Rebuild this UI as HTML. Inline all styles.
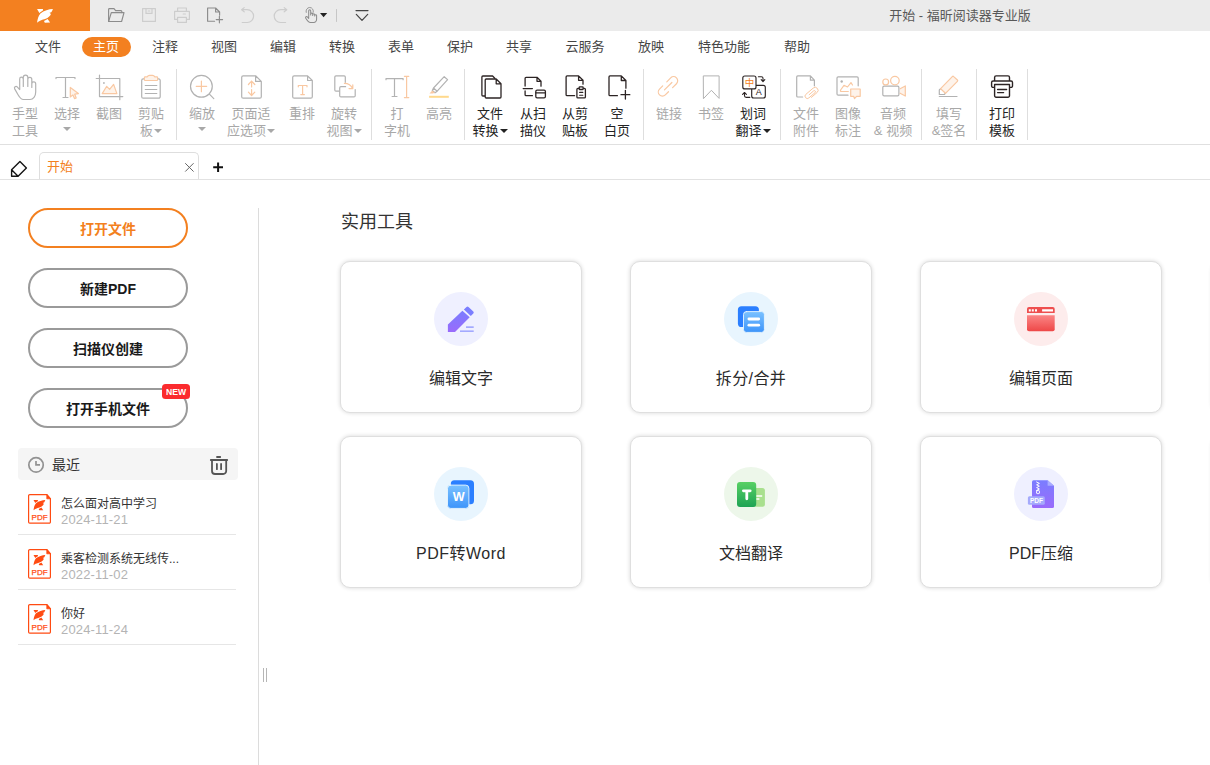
<!DOCTYPE html>
<html lang="zh-CN">
<head>
<meta charset="utf-8">
<title>开始 - 福昕阅读器专业版</title>
<style>
*{box-sizing:border-box;margin:0;padding:0}
html,body{width:1210px;height:765px;overflow:hidden;background:#fff}
body{position:relative;font-family:"Liberation Sans","Noto Sans CJK SC",sans-serif;font-size:13px;color:#333}
.abs{position:absolute}
svg{position:absolute;overflow:visible}
/* title bar */
#titlebar{position:absolute;left:0;top:0;width:1210px;height:31px;background:#ebebeb}
#logo{position:absolute;left:0;top:0;width:90px;height:31px;background:#f38020}
#title{position:absolute;left:860px;top:0;width:200px;height:31px;line-height:32px;text-align:center;font-size:13px;color:#585858;white-space:nowrap}
/* menu */
.mi{position:absolute;top:37px;width:70px;margin-left:-35px;height:20px;line-height:19px;font-size:13px;color:#464646;white-space:nowrap;text-align:center}
.mi.act{background:#f38020;color:#fff;border-radius:10px;width:49px;margin-left:-24.5px}
/* ribbon */
#ribbon{position:absolute;left:0;top:62px;width:1210px;height:83px;border-bottom:1px solid #e0e0e0}
.rb{position:absolute;top:105px;width:80px;margin-left:-40px;text-align:center;line-height:17px;font-size:13px;color:#a8a8a8;white-space:nowrap}
.rb.on{color:#222}
.sep{position:absolute;top:69px;width:1px;height:71px;background:#dedede}
.car{display:inline-block;width:0;height:0;border-left:4px solid transparent;border-right:4px solid transparent;border-top:4.5px solid currentColor;vertical-align:middle;margin-left:1px;position:relative;top:-1px}
.car.s{margin-left:0;top:-3px;left:0}
/* tab row */
#tabline{position:absolute;left:0;top:179px;width:1210px;height:1px;background:#e2e2e2}
#tab{position:absolute;left:39px;top:152px;width:160px;height:28px;border:1px solid #dedede;border-bottom:none;border-radius:5px 5px 0 0;background:#fff}
#tab span{position:absolute;left:7px;top:6px;line-height:16px;font-size:13px;color:#f38020}
/* left panel */
.btn{position:absolute;left:28px;width:160px;height:39.5px;border:2px solid #9a9a9a;border-radius:20px;text-align:center;line-height:39px;font-size:14px;font-weight:bold;color:#1a1a1a}
.btn.pri{border-color:#f38020;color:#f38020}
#new{position:absolute;left:162px;top:384px;width:28px;height:15px;border-radius:3.5px;background:#fb2b2e;color:#fff;font-size:9.6px;font-weight:bold;line-height:15.4px;text-align:center}
#new b{display:inline-block;transform:scaleX(.9);transform-origin:50% 50%}
#recent{position:absolute;left:18px;top:448px;width:220px;height:32px;border-radius:4px;background:#f5f5f5}
#recent span{position:absolute;left:34px;top:8px;font-size:14px;line-height:18px;color:#333}
.fi{position:absolute;left:18px;width:218px;height:55px;border-bottom:1px solid #e6e6e6}
.fi .t{position:absolute;left:43px;top:16px;font-size:12px;line-height:16px;color:#333;white-space:nowrap}
.fi .d{position:absolute;left:43px;top:32px;font-size:13px;line-height:16px;color:#b4b4b4;white-space:nowrap;letter-spacing:.15px}
#vline{position:absolute;left:258px;top:208px;width:1px;height:557px;background:#dcdcdc}
/* main */
#h1{position:absolute;left:341px;top:209px;font-size:18px;line-height:26px;color:#333;white-space:nowrap}
.card{position:absolute;width:242px;height:152px;border:1px solid #dfdfdf;border-radius:10px;background:#fff;box-shadow:0 0 4px rgba(0,0,0,.16)}
.card .c{position:absolute;left:93px;top:30px;width:54px;height:54px;border-radius:50%}
.card .l{position:absolute;left:0;width:240px;top:106px;text-align:center;font-size:16px;line-height:22px;color:#2b2b2b;white-space:nowrap}
</style>
</head>
<body>
<!-- TITLEBAR -->
<div id="titlebar">
  <div id="logo"></div>
  <div id="title">开始 - 福昕阅读器专业版</div>
</div>
<!-- MENU -->
<div class="mi" style="left:48px">文件</div>
<div class="mi act" style="left:106px">主页</div>
<div class="mi" style="left:165px">注释</div>
<div class="mi" style="left:224px">视图</div>
<div class="mi" style="left:283px">编辑</div>
<div class="mi" style="left:342px">转换</div>
<div class="mi" style="left:401px">表单</div>
<div class="mi" style="left:460px">保护</div>
<div class="mi" style="left:519px">共享</div>
<div class="mi" style="left:585px">云服务</div>
<div class="mi" style="left:651px">放映</div>
<div class="mi" style="left:724px">特色功能</div>
<div class="mi" style="left:797px">帮助</div>
<!-- RIBBON -->
<div id="ribbon"></div>
<div class="rb" style="left:25px">手型<br>工具</div>
<div class="rb" style="left:67px">选择<br><i class="car s"></i></div>
<div class="rb" style="left:109px">截图</div>
<div class="rb" style="left:151px">剪贴<br>板<i class="car"></i></div>
<div class="sep" style="left:176px"></div>
<div class="rb" style="left:202px">缩放<br><i class="car s"></i></div>
<div class="rb" style="left:251px">页面适<br>应选项<i class="car"></i></div>
<div class="rb" style="left:302px">重排</div>
<div class="rb" style="left:344px">旋转<br>视图<i class="car"></i></div>
<div class="sep" style="left:371px"></div>
<div class="rb" style="left:397px">打<br>字机</div>
<div class="rb" style="left:439px">高亮</div>
<div class="sep" style="left:464px"></div>
<div class="rb on" style="left:490px">文件<br>转换<i class="car"></i></div>
<div class="rb on" style="left:533px">从扫<br>描仪</div>
<div class="rb on" style="left:575px">从剪<br>贴板</div>
<div class="rb on" style="left:617px">空<br>白页</div>
<div class="sep" style="left:643px"></div>
<div class="rb" style="left:669px">链接</div>
<div class="rb" style="left:711px">书签</div>
<div class="rb on" style="left:753px">划词<br>翻译<i class="car"></i></div>
<div class="sep" style="left:780px"></div>
<div class="rb" style="left:806px">文件<br>附件</div>
<div class="rb" style="left:848px">图像<br>标注</div>
<div class="rb" style="left:893px">音频<br>&amp; 视频</div>
<div class="sep" style="left:921px"></div>
<div class="rb" style="left:949px">填写<br>&amp;签名</div>
<div class="sep" style="left:976px"></div>
<div class="rb on" style="left:1002px">打印<br>模板</div>
<div class="sep" style="left:1027px"></div>
<!-- TAB ROW -->
<div id="tab"><span>开始</span></div>
<div id="tabline"></div>
<!-- LEFT PANEL -->
<div class="btn pri" style="top:208px">打开文件</div>
<div class="btn" style="top:268px">新建PDF</div>
<div class="btn" style="top:328px">扫描仪创建</div>
<div class="btn" style="top:388px">打开手机文件</div>
<div id="new"><b>NEW</b></div>
<div id="recent"><span>最近</span></div>
<div class="fi" style="top:480px"><div class="t">怎么面对高中学习</div><div class="d">2024-11-21</div></div>
<div class="fi" style="top:535px"><div class="t">乘客检测系统无线传...</div><div class="d">2022-11-02</div></div>
<div class="fi" style="top:590px"><div class="t">你好</div><div class="d">2024-11-24</div></div>
<div id="vline"></div>
<!-- MAIN -->
<div id="h1">实用工具</div>
<div class="card" style="left:340px;top:261px"><div class="c" style="background:#eff0ff"></div><div class="l">编辑文字</div></div>
<div class="card" style="left:630px;top:261px"><div class="c" style="background:#e8f5fe"></div><div class="l" style="letter-spacing:.4px">拆分/合并</div></div>
<div class="card" style="left:920px;top:261px"><div class="c" style="background:#fdecec"></div><div class="l">编辑页面</div></div>
<div class="card" style="left:1212px;top:261px"></div>
<div class="card" style="left:340px;top:436px"><div class="c" style="background:#e8f5fe"></div><div class="l" style="letter-spacing:.5px">PDF转Word</div></div>
<div class="card" style="left:630px;top:436px"><div class="c" style="background:#edf7ea"></div><div class="l">文档翻译</div></div>
<div class="card" style="left:920px;top:436px"><div class="c" style="background:#eff0ff"></div><div class="l">PDF压缩</div></div>
<div class="card" style="left:1212px;top:436px"></div>
<!-- ICON OVERLAY (page coordinates) -->
<svg id="ov" width="1210" height="765" viewBox="0 0 1210 765" style="left:0;top:0;pointer-events:none" fill="none" stroke-linecap="round" stroke-linejoin="round">
<defs>
<linearGradient id="gPen" x1="0" y1="0" x2="0" y2="1"><stop offset="0" stop-color="#7a7dff"/><stop offset="1" stop-color="#9a6bfb"/></linearGradient>
<linearGradient id="gBlue" x1="0" y1="0" x2="0" y2="1"><stop offset="0" stop-color="#7ac1ff"/><stop offset="1" stop-color="#3d94fa"/></linearGradient>
<linearGradient id="gRed" x1="0" y1="0" x2="0" y2="1"><stop offset="0" stop-color="#fb8585"/><stop offset="1" stop-color="#ee4848"/></linearGradient>
<linearGradient id="gGreen" x1="0" y1="0" x2="0" y2="1"><stop offset="0" stop-color="#58d064"/><stop offset="1" stop-color="#1ea354"/></linearGradient>
</defs>
<!-- logo -->
<g fill="#fff" stroke="none">
<path d="M52.9 9 C48.8 9.2 44.1 10.5 40.4 13.4 C38.3 15.6 37.5 19.5 37.05 22.8 C38.5 21.3 41 20.3 45.1 19.1 C48.6 17.6 50.6 15.4 50.9 13.9 C50.3 13.6 49.7 13.2 49.5 12.8 C50.3 12.5 51 12.3 51.3 12.2 C52 11.2 52.5 10.1 52.9 9 Z"/>
<path d="M37.05 9 L43 9 L42.9 10.6 C41.6 11.3 40.3 12.2 39.4 13.1 Z"/>
<path d="M47.6 19.1 L50.1 22.6 L44.8 22.8 L44 21.1 C45.3 20.6 46.6 19.8 47.6 19.1 Z"/>
</g>
<!-- titlebar quick icons -->
<g stroke="#8c8c8c" stroke-width="1.15">
<path d="M108.6 21.5 V9.4 a.8 .8 0 0 1 .8 -.8 H114 L115.6 10.6 H121 a.8 .8 0 0 1 .8 .8 V12.6"/>
<path d="M111.3 12.6 H124 L121.6 21.5 H108.6 Z"/>
<path d="M214.6 21.2 H207.6 V8 H215.6 L219.6 12 V15.2 M215.6 8 V12 H219.6"/>
<path d="M216.2 19.6 H222.6 M219.4 16.4 V22.8"/>
<path d="M308.7 17.4 V10.8 a1 1 0 0 1 2 0 V15 V14.1 a1 1 0 0 1 2 0 V15.5 V14.8 a1 1 0 0 1 2 0 V16 V15.6 a.95 .95 0 0 1 1.9 0 V19 C316.7 21 315.4 22.5 313.8 22.5 H310.4 C308.8 22.5 307.4 20.8 305.8 18.2 C305 16.8 306.6 16 307.6 17.2 L308.7 18.4" stroke-width="1.05"/>
<path d="M306.2 12.4 A3.7 3.7 0 1 1 313.2 12.4" stroke-width=".9"/>
</g>
<g stroke="#cdcdcd" stroke-width="1.2">
<rect x="142.6" y="8.6" width="12.8" height="12.8"/>
<path d="M146 8.6 V13.4 H152 V8.6 M148.2 11 H149.8"/>
<path d="M177.6 11.4 V8 H186.4 V11.4 M177.6 19.4 H174.6 V11.4 H189.4 V19.4 H186.4 M177.6 17.4 H186.4 V22.4 H177.6 Z M183.2 14 H185.4"/>
<path d="M244.2 7.6 L241.6 9.7 L244.2 11.8 M241.8 9.7 H247.2 A6.4 6.4 0 0 1 247.2 22.5 H242.2"/>
<path d="M284.2 7.6 L286.8 9.7 L284.2 11.8 M286.6 9.7 H280.6 A6.4 6.4 0 0 0 280.6 22.5 H285.6"/>
</g>
<path d="M320 13 H327.2 L323.6 17.2 Z" fill="#222" stroke="none"/>
<path d="M336.5 9.5 V21.5" stroke="#c6c6c6" stroke-width="1"/>
<path d="M356 10.6 H368 M356.3 14.4 L362 20.4 L367.7 14.4" stroke="#444" stroke-width="1.2"/>
<!-- ribbon icons: disabled gray / light orange -->
<g stroke="#b2b2b2" stroke-width="1.2">
<!-- hand -->
<path d="M19.7 89.6 V79 a1.8 1.8 0 0 1 3.6 0 V86.5 M23.3 79.5 V77.3 a2.25 2.25 0 0 1 4.5 0 V86.5 M27.8 79.4 a2 2 0 0 1 4 0 V87.5 M31.8 83.9 a1.95 1.95 0 0 1 3.9 0 V92 C35.7 96.4 33.2 99.5 30 99.5 H23.4 C21.2 99.5 19.8 97.8 18.2 95 L14.7 88.9 C13.8 87.2 15.8 85.6 17.2 86.9 L19.7 89.6"/>
<!-- text select T -->
<path d="M56 78.6 V77.5 H75 V78.6 M65.5 77.5 V97.5 M63 97.5 H68"/>
<!-- crop -->
<path d="M99.5 75 V96.6 H122.8 M96.2 78.5 H119.8 V99.7"/>
<rect x="103.1" y="82.2" width="1.6" height="1.6" fill="#b2b2b2" stroke="none"/>
<!-- clipboard body + lines -->
<path d="M144.3 78.9 H143.2 a1.5 1.5 0 0 0 -1.5 1.5 V96.7 a1.5 1.5 0 0 0 1.5 1.5 H158.7 a1.5 1.5 0 0 0 1.5 -1.5 V80.4 a1.5 1.5 0 0 0 -1.5 -1.5 H157.7"/>
<path d="M145.3 85.5 H156.8 M145.3 89.5 H156.8 M145.3 93.5 H156.8"/>
<!-- zoom -->
<circle cx="201.4" cy="86.3" r="10.9"/>
<path d="M209.4 94.2 L213.8 98.6"/>
<!-- page fit doc -->
<path d="M255.6 75.8 H243.2 a1.5 1.5 0 0 0 -1.5 1.5 V96.7 a1.5 1.5 0 0 0 1.5 1.5 H259.8 a1.5 1.5 0 0 0 1.5 -1.5 V81.4 Z M255.6 75.8 V81.4 H261.3"/>
<!-- reflow doc -->
<path d="M307.6 75.8 H294.2 a1.5 1.5 0 0 0 -1.5 1.5 V96.7 a1.5 1.5 0 0 0 1.5 1.5 H310.8 a1.5 1.5 0 0 0 1.5 -1.5 V80.5 Z M307.6 75.8 V80.5 H312.3"/>
<!-- rotate rects -->
<path d="M339 91.2 H336 a1.2 1.2 0 0 1 -1.2 -1.2 V77.1 a1.2 1.2 0 0 1 1.2 -1.2 H344.1 a1.2 1.2 0 0 1 1.2 1.2 V82.3"/>
<path d="M345.6 86.7 H340.9 a1.2 1.2 0 0 0 -1.2 1.2 V95.7 a1.2 1.2 0 0 0 1.2 1.2 H354 a1.2 1.2 0 0 0 1.2 -1.2 V89.6"/>
<!-- typewriter T -->
<path d="M386 79.7 V78.6 H403.1 V79.7 M394.5 78.6 V96.5 M392.1 96.5 H397"/>
<!-- highlighter pen -->
<path d="M444.2 76.7 L447.6 79.6 L437.2 91.2 L433.5 88 Z M433.5 88 L432.3 90.5 L435 92.8 L437.2 91.2"/>
<!-- bookmark -->
<path d="M703.7 75.9 H719.1 V98.4 L711.4 90.3 L703.7 98.4 Z" stroke-width="1"/>
<!-- file attach doc -->
<path d="M802.6 97 H797.7 a1 1 0 0 1 -1 -1 V76.9 a1 1 0 0 1 1 -1 H810.4 L814.4 80.2 V85.8 M810.4 75.9 V80.2 H814.4"/>
<!-- image annot frame -->
<path d="M848 95.2 H838.2 a1.2 1.2 0 0 1 -1.2 -1.2 V78 a1.2 1.2 0 0 1 1.2 -1.2 H857 a1.2 1.2 0 0 1 1.2 1.2 V85.8"/>
<circle cx="841.7" cy="81.5" r="1.2" fill="#b2b2b2" stroke="none"/>
<!-- video body -->
<rect x="882.8" y="86.1" width="16.1" height="9.8" rx="1.3"/>
<!-- fill&sign tip + underline -->
<path d="M940.6 88.7 L939.3 90 V94.5 H944.2 L945.5 93.3 M939.3 96.5 H957"/>
</g>
<g stroke="#f9c8a2" stroke-width="1.2" fill="#fef3ea">
<!-- select cursor -->
<path d="M70.3 87.4 V97 L72.9 94.9 L74.5 98.6 L76.2 97.9 L74.7 94.2 L78.4 93.6 Z"/>
<!-- crop mountain -->
<path d="M102.2 93.6 L106.7 86.3 L109.6 89.3 L113.6 84.4 L116.9 93.6 Z"/>
<!-- clipboard clip -->
<path d="M144.4 77.6 a.8 .8 0 0 1 .8 -.8 H147.3 C147.8 75.6 148.6 75.3 149.5 75.3 H152.5 C153.4 75.3 154.2 75.6 154.7 76.8 H156.8 a.8 .8 0 0 1 .8 .8 V79.7 a.8 .8 0 0 1 -.8 .8 H145.2 a.8 .8 0 0 1 -.8 -.8 Z"/>
<!-- fill&sign pen body -->
<path d="M952.3 76.6 a1 1 0 0 1 1.4 0 L957.4 80 a1 1 0 0 1 0 1.4 L945.5 93.3 L940.6 88.7 Z"/>
<!-- video lens -->
<path d="M900.1 88.8 L905.3 85.9 V96.1 L900.1 93.2"/>
</g>
<g stroke="#f9c8a2" stroke-width="1.2">
<!-- zoom plus -->
<path d="M196.2 86.3 H206.7 M201.4 81 V91.7"/>
<!-- page fit arrows -->
<path d="M251.6 81.2 V87 M248.4 84.5 L251.6 81.2 L254.8 84.5 M251.6 89.5 V95.5 M248.4 92.2 L251.6 95.5 L254.8 92.2"/>
<!-- reflow T -->
<path d="M298.3 86.8 V85.5 H307 V86.8 M302.6 85.5 V94.6 M300.8 94.6 H304.4"/>
<!-- rotate arrow -->
<path d="M344.4 83.3 C348.6 83.3 351.2 85.2 352.6 88.5 M349 88.6 H352.8 V84.8"/>
<!-- typewriter I-beam -->
<path d="M406.6 76.3 V97.6 M404.4 76.3 H408.8 M404.4 97.6 H408.8"/>
<!-- link -->
<path transform="translate(668 86.4) rotate(-45)" d="M2.4 -4.1 H7.9 A4.1 4.1 0 0 1 7.9 4.1 H2.4 M-3.4 -4.1 H-7.9 A4.1 4.1 0 0 0 -7.9 4.1 H-3.4 M-5 0 H5.5"/>
<!-- paperclip -->
<path d="M809.2 94.7 L813.6 90.9 a1.1 1.1 0 0 1 1.5 1.7 L808.9 97.9 a2.3 2.3 0 0 1 -3.1 -3.5 L813.2 88.1 a2.9 2.9 0 0 1 3.9 4.4 L811.4 97.4" stroke-width="1"/>
<!-- image annot mountain + bubble -->
<path d="M852.5 85 L851 82.6 L847.5 87 L844 85.3 L840.6 90 Q840 91.5 841.5 91.5 H848.3"/>
<path d="M850.7 89 H860.2 V96.3 H856.6 L854.5 98.5 L853.6 96.3 H850.7 Z" fill="#fef3ea"/>
<!-- video reels -->
<circle cx="885.7" cy="81.9" r="2.9"/>
<circle cx="894.9" cy="80.6" r="4.3"/>
</g>
<path d="M432.3 90.5 L429.5 93.6 L432.9 93.5 L435 92.8 Z" fill="#f9c8a2" stroke="none"/>
<path d="M429.1 96.8 H448.8" stroke="#ffd98c" stroke-width="2" stroke-linecap="butt"/>
<!-- ribbon icons: enabled dark -->
<g stroke="#2c2424" stroke-width="1.3">
<!-- file convert -->
<path d="M484.8 96 H482.9 a1 1 0 0 1 -1 -1 V77 a1 1 0 0 1 1 -1 H492.6 L494.8 78.2"/>
<path d="M496.2 79 H486.2 a1 1 0 0 0 -1 1 V97 a1 1 0 0 0 1 1 H500 a1 1 0 0 0 1 -1 V83.8 Z M496.2 79 V83.8 H501" fill="#fff"/>
<!-- from scanner -->
<path d="M532.4 95.7 H526.1 a1 1 0 0 1 -1 -1 V91 M525.1 86 V78.3 a1 1 0 0 1 1 -1 H537 L541 81.3 V86.2 M537 77.3 V81.3 H541 M523.2 88.6 H532.4"/>
<rect x="535.8" y="90.1" width="9.6" height="7.7" rx="1.3"/>
<path d="M535.8 92.8 H545.4"/>
<!-- from clipboard -->
<path d="M574.6 95.7 H567.1 a1 1 0 0 1 -1 -1 V76.9 a1 1 0 0 1 1 -1 H578.6 L583 80.3 V84.2 M578.6 75.9 V80.3 H583"/>
<rect x="576.9" y="88.4" width="8.5" height="9.5" rx="1"/>
<rect x="579.2" y="86.9" width="3.9" height="2.6" rx=".6" fill="#fff"/>
<path d="M579.6 92.4 H582.8 M579.6 95.2 H582.8" stroke-width="1.1"/>
<!-- blank page -->
<path d="M617.4 95.7 H610 a1 1 0 0 1 -1 -1 V76.9 a1 1 0 0 1 1 -1 H621.3 L625.9 80.5 V88.2 M621.3 75.9 V80.5 H625.9 M621 94.7 H629.8 M625.4 90.3 V99.1"/>
<!-- translate -->
<rect x="751.7" y="85.3" width="13.6" height="12.7" rx="2" stroke-width="1.15"/>
<rect x="742.8" y="76" width="13.2" height="12.9" rx="2" fill="#fff" stroke-width="1.15"/>
<path d="M758.4 76.7 H761.4 a1.6 1.6 0 0 1 1.6 1.6 V81.4 M761.2 79.7 L763 81.6 L764.8 79.7 M749.8 97.4 H746.1 a1.6 1.6 0 0 1 -1.6 -1.6 V92.8 M742.6 94.4 L744.5 92.5 L746.4 94.4" stroke-width="1.1"/>
<!-- print template -->
<path d="M994.6 81 V77.4 a1.5 1.5 0 0 1 1.5 -1.5 H1008 a1.5 1.5 0 0 1 1.5 1.5 V81 M994.6 87.4 H993.1 a1.5 1.5 0 0 1 -1.5 -1.5 V82.5 a1.5 1.5 0 0 1 1.5 -1.5 H1011 a1.5 1.5 0 0 1 1.5 1.5 V85.9 a1.5 1.5 0 0 1 -1.5 1.5 H1009.5 M994.6 84.5 H1009.5 V95.7 a1.5 1.5 0 0 1 -1.5 1.5 H996.1 a1.5 1.5 0 0 1 -1.5 -1.5 Z M997.6 89.5 H1006.6 M997.6 92.6 H1003.6" stroke-width="1.4"/>
</g>
<text x="749.4" y="86.3" font-size="9.5" font-family="Liberation Sans,Noto Sans CJK SC,sans-serif" fill="#f38020" stroke="none" text-anchor="middle">中</text>
<text x="758.7" y="95.4" font-size="9" font-family="Liberation Sans,sans-serif" fill="#2c2424" stroke="none" text-anchor="middle">A</text>
<!-- tab row -->
<path d="M19.95 161.6 L26.4 167.9 L18.1 176.3 H11.6 V169.7 Z M11.6 169.7 L18.1 176.2" stroke="#151515" stroke-width="1.4"/>
<path d="M185.5 163.5 L193.3 171.3 M193.3 163.5 L185.5 171.3" stroke="#666" stroke-width="1"/>
<path d="M213.2 167.2 H223 M218.1 162.4 V172" stroke="#111" stroke-width="2" stroke-linecap="butt"/>
<!-- recent header icons -->
<circle cx="36.05" cy="464.9" r="7.2" stroke="#929292" stroke-width="1.7"/>
<path d="M36 461 V464.9 H40" stroke="#929292" stroke-width="1.7" stroke-linecap="butt" stroke-linejoin="miter"/>
<g stroke="#555" stroke-width="1.8">
<path d="M217 457 H220.2 M210.8 460 H227.2 M212 460 V471 a3 3 0 0 0 3 3 H223.2 a3 3 0 0 0 3 -3 V460 M216.9 464 V469.2 M221.1 464 V469.2"/>
</g>
<!-- splitter grip -->
<path d="M263.5 668 V682 M266.5 668 V682" stroke="#b6b6b6" stroke-width="1" stroke-linecap="butt"/>
<!-- recent file icons -->
<g transform="translate(28 494)">
<path d="M18.8 .6 H1.8 a1.2 1.2 0 0 0 -1.2 1.2 V28 a1.2 1.2 0 0 0 1.2 1.2 H21.2 a1.2 1.2 0 0 0 1.2 -1.2 V4.8 Z" stroke="#ff4b12" stroke-width="1.2" fill="#fff"/>
<path d="M18.8 .6 V4.8 H22.4 Z" fill="#ff4b12" stroke="#ff4b12" stroke-width=".8"/>
<g fill="#ff4b12" stroke="none" transform="translate(5.5 6) scale(.745) translate(-37.05 -9)">
<path d="M52.9 9 C48.8 9.2 44.1 10.5 40.4 13.4 C38.3 15.6 37.5 19.5 37.05 22.8 C38.5 21.3 41 20.3 45.1 19.1 C48.6 17.6 50.6 15.4 50.9 13.9 C50.3 13.6 49.7 13.2 49.5 12.8 C50.3 12.5 51 12.3 51.3 12.2 C52 11.2 52.5 10.1 52.9 9 Z"/>
<path d="M37.05 9 L43 9 L42.9 10.6 C41.6 11.3 40.3 12.2 39.4 13.1 Z"/>
<path d="M47.6 19.1 L50.1 22.6 L44.8 22.8 L44 21.1 C45.3 20.6 46.6 19.8 47.6 19.1 Z"/>
</g>
<text x="11.6" y="25.8" font-size="8" font-family="Liberation Sans,sans-serif" fill="#ff4b12" stroke="#ff4b12" stroke-width=".25" text-anchor="middle">PDF</text>
</g>
<g transform="translate(28 549)">
<path d="M18.8 .6 H1.8 a1.2 1.2 0 0 0 -1.2 1.2 V28 a1.2 1.2 0 0 0 1.2 1.2 H21.2 a1.2 1.2 0 0 0 1.2 -1.2 V4.8 Z" stroke="#ff4b12" stroke-width="1.2" fill="#fff"/>
<path d="M18.8 .6 V4.8 H22.4 Z" fill="#ff4b12" stroke="#ff4b12" stroke-width=".8"/>
<g fill="#ff4b12" stroke="none" transform="translate(5.5 6) scale(.745) translate(-37.05 -9)">
<path d="M52.9 9 C48.8 9.2 44.1 10.5 40.4 13.4 C38.3 15.6 37.5 19.5 37.05 22.8 C38.5 21.3 41 20.3 45.1 19.1 C48.6 17.6 50.6 15.4 50.9 13.9 C50.3 13.6 49.7 13.2 49.5 12.8 C50.3 12.5 51 12.3 51.3 12.2 C52 11.2 52.5 10.1 52.9 9 Z"/>
<path d="M37.05 9 L43 9 L42.9 10.6 C41.6 11.3 40.3 12.2 39.4 13.1 Z"/>
<path d="M47.6 19.1 L50.1 22.6 L44.8 22.8 L44 21.1 C45.3 20.6 46.6 19.8 47.6 19.1 Z"/>
</g>
<text x="11.6" y="25.8" font-size="8" font-family="Liberation Sans,sans-serif" fill="#ff4b12" stroke="#ff4b12" stroke-width=".25" text-anchor="middle">PDF</text>
</g>
<g transform="translate(28 604)">
<path d="M18.8 .6 H1.8 a1.2 1.2 0 0 0 -1.2 1.2 V28 a1.2 1.2 0 0 0 1.2 1.2 H21.2 a1.2 1.2 0 0 0 1.2 -1.2 V4.8 Z" stroke="#ff4b12" stroke-width="1.2" fill="#fff"/>
<path d="M18.8 .6 V4.8 H22.4 Z" fill="#ff4b12" stroke="#ff4b12" stroke-width=".8"/>
<g fill="#ff4b12" stroke="none" transform="translate(5.5 6) scale(.745) translate(-37.05 -9)">
<path d="M52.9 9 C48.8 9.2 44.1 10.5 40.4 13.4 C38.3 15.6 37.5 19.5 37.05 22.8 C38.5 21.3 41 20.3 45.1 19.1 C48.6 17.6 50.6 15.4 50.9 13.9 C50.3 13.6 49.7 13.2 49.5 12.8 C50.3 12.5 51 12.3 51.3 12.2 C52 11.2 52.5 10.1 52.9 9 Z"/>
<path d="M37.05 9 L43 9 L42.9 10.6 C41.6 11.3 40.3 12.2 39.4 13.1 Z"/>
<path d="M47.6 19.1 L50.1 22.6 L44.8 22.8 L44 21.1 C45.3 20.6 46.6 19.8 47.6 19.1 Z"/>
</g>
<text x="11.6" y="25.8" font-size="8" font-family="Liberation Sans,sans-serif" fill="#ff4b12" stroke="#ff4b12" stroke-width=".25" text-anchor="middle">PDF</text>
</g>
<!-- card icons -->
<g transform="translate(434 292)" stroke="none">
<path d="M13.9 32.5 L28.4 18.8 L35.7 25.3 L21 40 H13.9 Z" fill="url(#gPen)"/>
<path d="M29.9 17.4 L32.5 14.9 a1.4 1.4 0 0 1 2 0 L39.3 19.6 a1.4 1.4 0 0 1 0 2 L36.8 24.1 Z" fill="#7b7eff"/>
<rect x="32" y="34.3" width="7.7" height="1.7" fill="#a3a9ff"/>
<rect x="26" y="38.4" width="13.7" height="1.6" fill="#a3a9ff"/>
</g>
<g transform="translate(724 292)" stroke="none">
<rect x="13.9" y="14.2" width="21" height="20.8" rx="3.6" fill="#2b7fff"/>
<rect x="19.5" y="19.6" width="20.9" height="20.8" rx="2.8" fill="url(#gBlue)" stroke="#e8f5fe" stroke-width=".9"/>
<rect x="23.5" y="25.6" width="12.6" height="2.8" rx="1.4" fill="#fff"/>
<rect x="23.5" y="31.8" width="12.6" height="2.8" rx="1.4" fill="#fff"/>
</g>
<g transform="translate(1014 292)" stroke="none">
<path d="M13 21 V17.1 a2 2 0 0 1 2 -2 H38.7 a2 2 0 0 1 2 2 V21 Z" fill="#ee4e4e"/>
<path d="M14.8 17.2 h2 v2.2 h-2 z M17.8 17.2 h2 v2.2 h-2 z M21 17.2 h2 v2.2 h-2 z M28.1 17.2 h10.9 v2.2 h-10.9 z" fill="#fff"/>
<path d="M13 23.3 H40.7 V37.2 a2 2 0 0 1 -2 2 H15 a2 2 0 0 1 -2 -2 Z" fill="url(#gRed)"/>
</g>
<g transform="translate(434 467)" stroke="none">
<rect x="16.8" y="13.3" width="23.2" height="24" rx="3.6" fill="#2b7fff"/>
<rect x="13.5" y="18.1" width="21.4" height="23.3" rx="3.2" fill="url(#gBlue)" stroke="#e8f5fe" stroke-width=".9"/>
<text x="24.7" y="34.3" font-size="12.6" font-weight="bold" font-family="Liberation Sans,sans-serif" fill="#fff" text-anchor="middle">W</text>
</g>
<g transform="translate(724 467)" stroke="none">
<rect x="28" y="21" width="12.9" height="18.8" rx="2.5" fill="#a9e08e"/>
<rect x="13" y="15.1" width="19.2" height="24.9" rx="3" fill="url(#gGreen)"/>
<path d="M19.4 23.8 H26.2 M22.8 23.8 V31.8" stroke="#fff" stroke-width="2.8"/>
<path d="M32.4 29 H38.2 M32.4 32 H35.4" stroke="#fff" stroke-width="1.3" stroke-linecap="butt"/>
</g>
<g transform="translate(1014 467)" stroke="none">
<path d="M19.5 13.3 H33.6 L40 18.8 V39.5 a1.5 1.5 0 0 1 -1.5 1.5 H19.5 a1.5 1.5 0 0 1 -1.5 -1.5 V14.8 a1.5 1.5 0 0 1 1.5 -1.5 Z" fill="url(#gPen)"/>
<path d="M33.6 13.3 V18.8 H40 Z" fill="#a9acff"/>
<path d="M22.6 15 L25.4 16.4 L22.6 17.8 L25.4 19.2 L22.6 20.6 L25.4 22 L22.6 23.4" stroke="#fff" stroke-width="1" fill="none"/>
<rect x="22.6" y="23.6" width="2.8" height="3" rx=".6" stroke="#fff" stroke-width="1" fill="none"/>
<rect x="13.9" y="29.3" width="16.9" height="8.5" rx="1.5" fill="#a5aafc"/>
<text x="22.4" y="35.9" font-size="6.5" font-weight="bold" font-family="Liberation Sans,sans-serif" fill="#fff" text-anchor="middle">PDF</text>
</g>
</svg>
</body>
</html>
